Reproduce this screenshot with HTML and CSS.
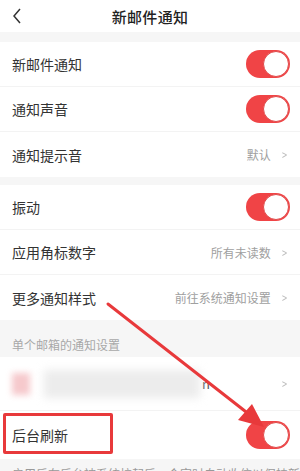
FILE: index.html
```html
<!DOCTYPE html>
<html lang="zh">
<head>
<meta charset="utf-8">
<link rel="stylesheet" href="styles.css">
</head>
<body>
<div class="screen">
  <header class="topbar">
    <svg class="back" width="10" height="16" viewBox="0 0 10 16"><path d="M8 1 L2 8 L8 15" fill="none" stroke="#333" stroke-width="1.5"/></svg>
    <div class="title">新邮件通知</div>
  </header>

  <section class="group">
    <div class="row"><span class="label">新邮件通知</span><span class="toggle"><span class="knob"></span></span></div>
    <div class="row"><span class="label">通知声音</span><span class="toggle"><span class="knob"></span></span></div>
    <div class="row"><span class="label">通知提示音</span><span class="value">默认<span class="chev">&gt;</span></span></div>
  </section>

  <section class="group">
    <div class="row"><span class="label">振动</span><span class="toggle"><span class="knob"></span></span></div>
    <div class="row"><span class="label">应用角标数字</span><span class="value">所有未读数<span class="chev">&gt;</span></span></div>
    <div class="row"><span class="label">更多通知样式</span><span class="value">前往系统通知设置<span class="chev">&gt;</span></span></div>
  </section>

  <div class="caption">单个邮箱的通知设置</div>

  <section class="group tight">
    <div class="row account">
      <span class="acct-left"><span class="avatar"></span><span class="blurbar"></span><span class="tail">n</span></span>
      <span class="value"><span class="chev">&gt;</span></span>
    </div>
    <div class="row refresh"><span class="label">后台刷新</span><span class="toggle"><span class="knob"></span></span></div>
  </section>

  <div class="footnote">启用后在后台被系统拉起后，会定时自动收信以保持新邮件</div>

  <div class="highlight"></div>
  <svg class="arrow" width="300" height="471" viewBox="0 0 300 471">
    <line x1="108" y1="304" x2="250" y2="415" stroke="#e8393b" stroke-width="3" stroke-linecap="round"/>
    <polygon points="264,427 238,420 252,404" fill="#e8393b"/>
  </svg>
</div>
</body>
</html>
```

FILE: styles.css
```css
html, body {
  margin: 0;
  padding: 0;
  background: #f6f6f6;
}
body {
  font-family: "Noto Sans CJK SC", "Noto Sans", sans-serif;
  color: #333;
}
.screen {
  position: relative;
  width: 300px;
  height: 471px;
  overflow: hidden;
  background: #f6f6f6;
}
.topbar {
  position: relative;
  height: 32px;
  background: #fff;
  display: flex;
  align-items: center;
  justify-content: center;
  margin-bottom: 10px;
}
.back {
  position: absolute;
  left: 12px;
  top: 8px;
}
.title {
  font-size: 15px;
  font-weight: 500;
  color: #222;
  letter-spacing: 0.3px;
}
.group {
  background: #fff;
  margin-bottom: 8px;
}
.group.tight {
  margin-bottom: 0;
}
.row {
  height: 45px;
  display: flex;
  align-items: center;
  justify-content: space-between;
  padding: 0 10px 0 12px;
  border-bottom: 1px solid #f3f3f3;
  box-sizing: border-box;
}
.row:last-child {
  border-bottom: none;
}
.label {
  font-size: 14px;
  color: #333;
}
.value {
  font-size: 12px;
  color: #a0a0a0;
  display: flex;
  align-items: center;
}
.chev {
  font-size: 13px;
  color: #bbb;
  margin-left: 10px;
  margin-right: 2px;
  transform: scaleX(0.7);
}
.toggle {
  width: 44px;
  height: 28px;
  border-radius: 14px;
  background: #f04446;
  position: relative;
  flex: none;
}
.knob {
  position: absolute;
  right: 1px;
  top: 1px;
  width: 24px;
  height: 24px;
  border-radius: 50%;
  background: #fff;
  border: 1px solid #e04a4a;
}
.caption {
  height: 37px;
  margin-top: -8px;
  padding: 16px 0 0 12px;
  box-sizing: border-box;
  font-size: 12px;
  color: #a8a8a8;
  background: #f6f6f6;
}
.account {
  height: 54px;
  border-bottom: 1px solid #f3f3f3;
}
.acct-left {
  display: flex;
  align-items: center;
}
.avatar {
  width: 18px;
  height: 22px;
  background: #f6c9cc;
  filter: blur(3px);
  margin-right: 14px;
}
.blurbar {
  width: 156px;
  height: 28px;
  background: #ececec;
  filter: blur(4px);
}
.tail {
  font-size: 13px;
  color: #555;
  margin-left: 2px;
}
.refresh {
  height: 48px;
}
.footnote {
  padding: 6px 0 0 12px;
  font-size: 12px;
  color: #999;
  white-space: nowrap;
  background: #f6f6f6;
}
.highlight {
  position: absolute;
  left: 3px;
  top: 413px;
  width: 104px;
  height: 35px;
  border: 3px solid #e8393b;
  border-radius: 2px;
}
.arrow {
  position: absolute;
  left: 0;
  top: 0;
}
```
